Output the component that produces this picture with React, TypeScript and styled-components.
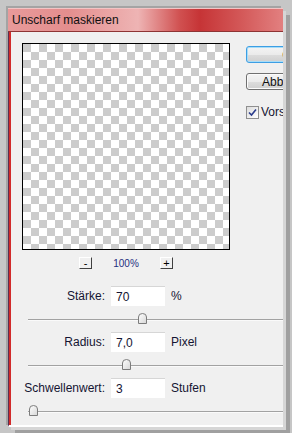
import React from 'react';
import styled, { createGlobalStyle } from 'styled-components';

const GlobalStyle = createGlobalStyle`
  html, body {
    margin: 0;
    padding: 0;
    background: #c6c6c6;
    font-family: "Liberation Sans", Arial, sans-serif;
  }
`;

const Page = styled.div`
  width: 292px;
  height: 433px;
  box-sizing: border-box;
  padding: 8px 0 0 8px;
  background: #c6c6c6;
  overflow: hidden;
`;

const Window = styled.div`
  width: 275px;
  height: 419px;
  display: flex;
  flex-direction: column;
  overflow: hidden;
  box-shadow: -2px -2px 0 #a4a4a4, 3px 3px 0 #d6d6d6, 7px 7px 0 #a0a0a0;
`;

const TitleBar = styled.div`
  height: 22px;
  flex: none;
  display: flex;
  align-items: center;
  padding-left: 4px;
  border-top: 1px solid #f2c4c4;
  border-bottom: 1px solid #8e3434;
  background: linear-gradient(
    90deg,
    #e89a9a 0px,
    #e48e8e 60px,
    #eeb4b4 130px,
    #d05050 172px,
    #c63436 192px,
    #d45a5a 235px,
    #e28080 275px
  );
  font-size: 12px;
  color: #101010;
`;

const Body = styled.div`
  flex: 1;
  display: flex;
  flex-direction: column;
  background: #f0f0f0;
  border-left: 1px solid #5a3050;
  box-shadow: inset 2px 0 0 #d22a2a;
  border-bottom: 2px solid #ffffff;
  padding: 11px 0 0 13px;
  color: #141432;
  font-size: 12px;
`;

const TopRow = styled.div`
  display: flex;
`;

const PreviewColumn = styled.div`
  width: 208px;
  display: flex;
  flex-direction: column;
`;

const Preview = styled.div`
  width: 208px;
  height: 207px;
  box-sizing: border-box;
  border: 1px solid #000;
  background: repeating-conic-gradient(#ffffff 0 25%, #cccccc 0 50%) 0 0 / 16px 16px;
`;

const ZoomRow = styled.div`
  margin-top: 7px;
  height: 12px;
  display: flex;
  align-items: center;
  padding-left: 57px;
`;

const ZoomButton = styled.div`
  width: 13px;
  height: 12px;
  box-sizing: border-box;
  border-top: 1px solid #ffffff;
  border-left: 1px solid #ffffff;
  border-right: 1px solid #404040;
  border-bottom: 1px solid #404040;
  display: flex;
  align-items: center;
  justify-content: center;
  font-size: 11px;
  line-height: 1;
  color: #000;
`;

const ZoomLabel = styled.span`
  width: 68px;
  text-align: center;
  font-size: 10px;
  color: #1f2f80;
`;

const SideColumn = styled.div`
  margin-left: 16px;
  padding-top: 3px;
  display: flex;
  flex-direction: column;
`;

const DialogButton = styled.div<{ $default?: boolean }>`
  width: 90px;
  height: 17px;
  box-sizing: border-box;
  border-radius: 3px;
  border: 1px solid ${(p) => (p.$default ? '#3c9ee4' : '#707070')};
  box-shadow: ${(p) => (p.$default ? 'inset 0 0 0 1px #a8ddf8' : 'inset 0 0 0 1px #fbfbfb')};
  background: linear-gradient(#f4f4f4 0%, #ebebeb 50%, #dddddd 51%, #cfcfcf 100%);
  display: flex;
  align-items: center;
  justify-content: center;
  font-size: 12px;
  color: #111;
  & + & {
    margin-top: 10px;
  }
`;

const CheckRow = styled.label`
  margin-top: 15px;
  display: flex;
  align-items: center;
  gap: 2px;
  font-size: 12px;
  color: #141432;
`;

const CheckBox = styled.span`
  width: 13px;
  height: 13px;
  box-sizing: border-box;
  border: 1px solid #8f8f8f;
  background: linear-gradient(135deg, #dcdcdc, #ffffff);
  display: flex;
  align-items: center;
  justify-content: center;
`;

const ParamRow = styled.div<{ $gap?: number }>`
  display: flex;
  align-items: center;
  height: 20px;
  margin-top: ${(p) => p.$gap ?? 0}px;
`;

const Label = styled.span`
  width: 83px;
  text-align: right;
  margin-right: 6px;
  white-space: nowrap;
`;

const NumberInput = styled.div`
  width: 54px;
  height: 20px;
  box-sizing: border-box;
  background: #fff;
  border-top: 1px solid #d6d6d6;
  padding-left: 5px;
  display: flex;
  align-items: center;
`;

const Unit = styled.span`
  margin-left: 6px;
`;

const SliderBlock = styled.div`
  position: relative;
  height: 26px;
`;

const Track = styled.div`
  position: absolute;
  top: 13px;
  left: 6px;
  right: 0;
  height: 1px;
  background: #a2a2a2;
  border-bottom: 1px solid #fafafa;
`;

const Thumb = styled.svg`
  position: absolute;
  top: 7px;
  width: 9px;
  height: 11px;
`;

function SliderThumb({ left }: { left: number }) {
  return (
    <Thumb viewBox="0 0 9 11" style={{ left: left + 6 }}>
      <defs>
        <linearGradient id="thumbFill" x1="0" y1="0" x2="1" y2="1">
          <stop offset="0" stopColor="#ffffff" />
          <stop offset="1" stopColor="#d6d6d6" />
        </linearGradient>
      </defs>
      <path
        d="M0.5 10.5 V4 Q0.5 0.5 4.5 0.5 Q8.5 0.5 8.5 4 V10.5 Z"
        fill="url(#thumbFill)"
        stroke="#7c7c7c"
        strokeWidth="1"
      />
    </Thumb>
  );
}

interface Param {
  label: string;
  value: string;
  unit: string;
  thumb: number;
}

const params: Param[] = [
  { label: 'Stärke:', value: '70', unit: '%', thumb: 110 },
  { label: 'Radius:', value: '7,0', unit: 'Pixel', thumb: 94 },
  { label: 'Schwellenwert:', value: '3', unit: 'Stufen', thumb: 1 },
];

export default function App() {
  return (
    <Page>
      <GlobalStyle />
      <Window>
        <TitleBar>Unscharf maskieren</TitleBar>
        <Body>
          <TopRow>
            <PreviewColumn>
              <Preview />
              <ZoomRow>
                <ZoomButton>-</ZoomButton>
                <ZoomLabel>100%</ZoomLabel>
                <ZoomButton>+</ZoomButton>
              </ZoomRow>
            </PreviewColumn>
            <SideColumn>
              <DialogButton $default>OK</DialogButton>
              <DialogButton>Abbrechen</DialogButton>
              <CheckRow>
                <CheckBox>
                  <svg width="9" height="9" viewBox="0 0 9 9">
                    <path d="M1 4.5 L3.5 7 L8 1.5" fill="none" stroke="#2a3c8c" strokeWidth="1.6" />
                  </svg>
                </CheckBox>
                Vorschau
              </CheckRow>
            </SideColumn>
          </TopRow>
          {params.map((p, i) => (
            <React.Fragment key={p.label}>
              <ParamRow $gap={i === 0 ? 17 : 0}>
                <Label>{p.label}</Label>
                <NumberInput>{p.value}</NumberInput>
                <Unit>{p.unit}</Unit>
              </ParamRow>
              <SliderBlock>
                <Track />
                <SliderThumb left={p.thumb} />
              </SliderBlock>
            </React.Fragment>
          ))}
        </Body>
      </Window>
    </Page>
  );
}
